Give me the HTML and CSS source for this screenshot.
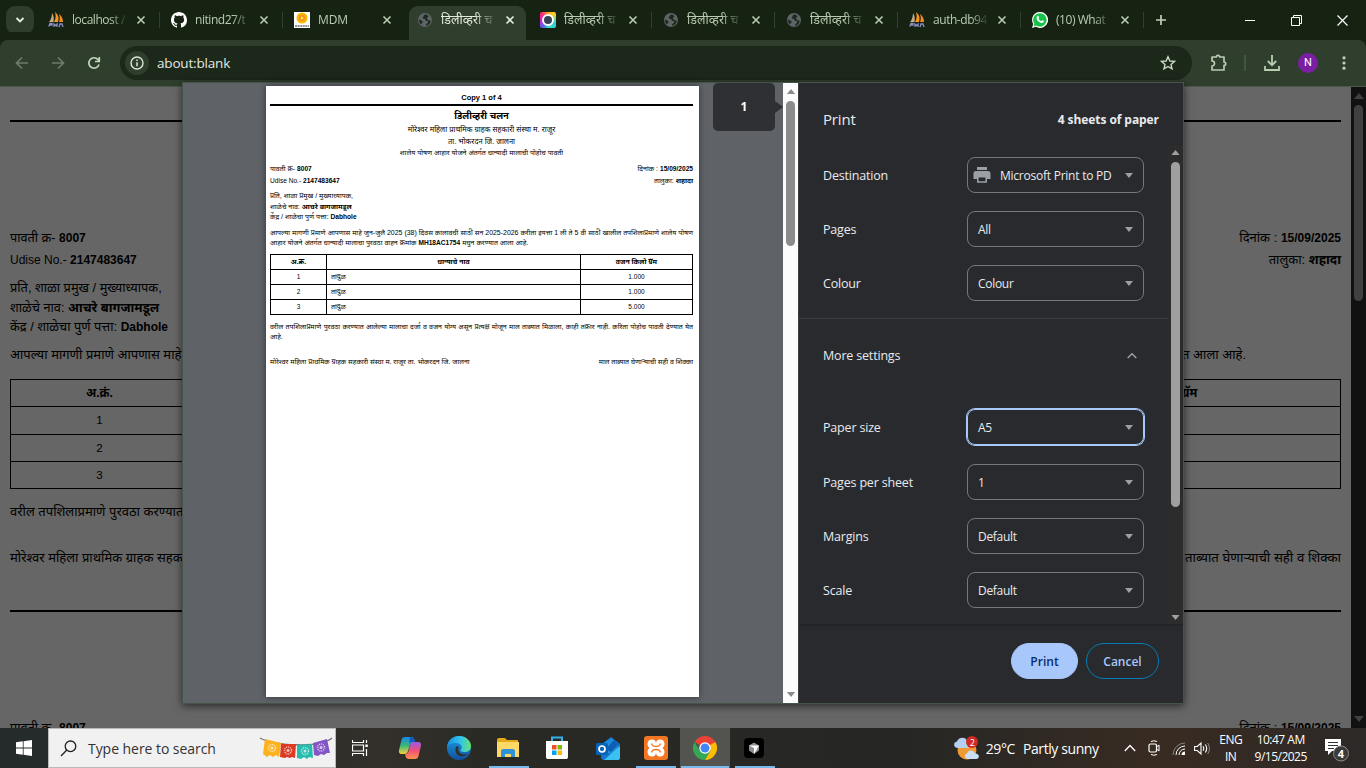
FILE: index.html
```html
<!DOCTYPE html>
<html lang="en">
<head>
<meta charset="utf-8">
<title>about:blank</title>
<link rel="stylesheet" href="styles.css">
</head>
<body>
<svg class="defs" width="0" height="0">
  <symbol id="pma" viewBox="0 0 16 16"><path d="M1 10C3 8 4 4 4 1c2 3 2 6 1.500 9z" fill="#c9ad86"/><path d="M6 10C8 7 8 3 7 0c4 3 4 7 3 10z" fill="#f7931e"/><path d="M11 10c1-2 1-5 0-8 3 2 4 5 4 8z" fill="#ef8a1c"/><path d="M.8 14.500 2 11.500h2v1.500H2M6 15v-3l1.500 1.500L9 12v3M11 15l1-3h2l1 3" fill="none" stroke="#8d8fc4" stroke-width="1.300"/></symbol>
  <symbol id="globe" viewBox="0 0 16 16"><circle cx="8" cy="8" r="7" fill="#5f6368"/><path d="M8 2.500c-2 1-1 2-2 2.500s0 2 1.500 2S8 9 10 9s1 2 0 2.500-.500 2-1.500 2.500c3-.500 5-2.500 5.300-5.300-1-.700-2 .300-3-1S9.500 6 11 5 10 2.500 8 2.500zM2 7.500c1 0 2 .500 3 1.500s1 1.500 0 2-1 1.500-1 1.500C2.500 11.500 2 9.500 2 7.500z" fill="#1d2b1c"/></symbol>
  <symbol id="x" viewBox="0 0 10 10"><path d="M1.500 1.500l7 7M8.500 1.500l-7 7" stroke="currentColor" stroke-width="1.600" fill="none"/></symbol>
  <symbol id="tri" viewBox="0 0 10 6"><path d="M0 6 5 0l5 6z" fill="currentColor"/></symbol>
  <symbol id="down" viewBox="0 0 8 5"><path d="M0 0h8L4 5z" fill="currentColor"/></symbol>
</svg>

<div class="screen">
  <header class="tabs">
    <div class="tab-search"><svg width="10" height="10" viewBox="0 0 10 10"><path d="M1.500 3 5 6.500 8.500 3" fill="none" stroke="#e3ecdf" stroke-width="1.900"/></svg></div>
    <div class="tab"><svg class="fav"><use href="#pma"/></svg><span class="label">localhost /</span><svg class="close"><use href="#x"/></svg></div>
    <div class="tab"><svg class="fav" viewBox="0 0 16 16"><path fill="#fff" d="M8 0C3.580 0 0 3.580 0 8c0 3.540 2.290 6.530 5.470 7.590.4.070.55-.17.55-.38 0-.19-.01-.82-.01-1.490-2.010.37-2.530-.49-2.690-.94-.09-.23-.48-.94-.82-1.130-.28-.15-.68-.52-.01-.53.63-.01 1.080.58 1.230.82.72 1.210 1.870.87 2.330.66.07-.52.28-.87.51-1.070-1.780-.2-3.640-.89-3.640-3.950 0-.87.31-1.590.82-2.150-.08-.2-.36-1.020.08-2.120 0 0 .67-.21 2.200.82.64-.18 1.320-.27 2-.27s1.360.09 2 .27c1.530-1.040 2.200-.82 2.200-.82.44 1.100.16 1.920.08 2.120.51.56.82 1.270.82 2.150 0 3.070-1.870 3.750-3.650 3.950.29.25.54.73.54 1.480 0 1.070-.01 1.930-.01 2.200 0 .21.15.46.55.38A8.010 8.010 0 0 0 16 8c0-4.420-3.580-8-8-8z"/></svg><span class="label">nitind27/t</span><svg class="close"><use href="#x"/></svg></div>
    <div class="tab last"><svg class="fav" viewBox="0 0 16 16"><path fill="#fff" d="M0 0h16v16H0z"/><circle cx="8" cy="6" r="5.500" fill="#f9b700"/><circle cx="8" cy="6" r="3" fill="#f58a1f"/><circle cx="8" cy="6" r="1.500" fill="#ffe14a"/><path d="M1 14h14" stroke="#6c6b78" stroke-width="1.500" stroke-dasharray="2 .6"/></svg><span class="label plain">MDM</span><svg class="close"><use href="#x"/></svg></div>
    <div class="tab active"><svg class="fav"><use href="#globe"/></svg><span class="label hi">डिलीव्हरी च</span><svg class="close"><use href="#x"/></svg></div>
    <div class="tab"><i class="fav camera"><b></b></i><span class="label hi">डिलीव्हरी च</span><svg class="close"><use href="#x"/></svg></div>
    <div class="tab"><svg class="fav"><use href="#globe"/></svg><span class="label hi">डिलीव्हरी च</span><svg class="close"><use href="#x"/></svg></div>
    <div class="tab"><svg class="fav"><use href="#globe"/></svg><span class="label hi">डिलीव्हरी च</span><svg class="close"><use href="#x"/></svg></div>
    <div class="tab"><svg class="fav"><use href="#pma"/></svg><span class="label">auth-db94</span><svg class="close"><use href="#x"/></svg></div>
    <div class="tab"><svg class="fav" viewBox="0 0 16 16"><path d="M0 16 1.200 12A8 8 0 1 1 4 14.800z" fill="#fff"/><path d="M1.600 14.400 2.400 11.800A6.700 6.700 0 1 1 4.300 13.600z" fill="#16c24a"/><path d="M5.200 4.200c1-.9 1.500.2 1.900 1.300.1.500-.6.900-.5 1.200.5 1.100 1.400 1.900 2.500 2.300.4.100.8-.9 1.200-.8 1.100.4 2 .7 1.400 1.700-.8 1.300-2.300 1.200-4 .3C5.600 9.100 3.500 6.500 5.200 4.200z" fill="#fff"/></svg><span class="label">(10) What</span><svg class="close"><use href="#x"/></svg></div>
    <svg class="plus" width="12" height="12" viewBox="0 0 12 12"><path d="M6 1v10M1 6h10" stroke="#c1d0bb" stroke-width="1.700"/></svg>
    <div class="window-buttons">
      <svg width="11" height="11" viewBox="0 0 11 11"><path d="M0 5.500h10" stroke="#fff"/></svg>
      <svg width="11" height="11" viewBox="0 0 11 11"><path d="M.5 2.500h8v8h-8zM2.500 2.500v-2h8v8h-2" fill="none" stroke="#fff"/></svg>
      <svg width="11" height="11" viewBox="0 0 11 11"><path d="M.5.5l10 10M10.500.5l-10 10" fill="none" stroke="#fff" stroke-width="1.200"/></svg>
    </div>
  </header>

  <nav class="toolbar">
    <svg class="nav dim" viewBox="0 0 16 16"><path d="M14 8H3M8 2.500 2.500 8 8 13.500"/></svg>
    <svg class="nav dim" viewBox="0 0 16 16"><path d="M2 8h11M8 2.500 13.500 8 8 13.500"/></svg>
    <svg class="nav" viewBox="0 0 16 16"><path d="M13 9.500A5.200 5.200 0 1 1 12 4.600l1 1.400M13.300 2v4.500H9"/></svg>
    <div class="omnibox">
      <span class="site-info"><svg width="14" height="14" viewBox="0 0 14 14"><circle cx="7" cy="7" r="6" fill="none" stroke="#dde6d9" stroke-width="1.400"/><path d="M7 6.200v4M7 3.600v1.500" stroke="#dde6d9" stroke-width="1.500"/></svg></span>
      <span class="url">about:blank</span>
      <svg width="16" height="16" viewBox="0 0 16 16"><path d="M8 1.800l1.900 4.200 4.500.4-3.400 3 1 4.500L8 11.500l-4 2.400 1-4.500-3.400-3 4.500-.4z" fill="none" stroke="#cad9c4" stroke-width="1.400"/></svg>
    </div>
    <svg class="ext" width="18" height="18" viewBox="0 0 18 18"><path d="M2 3h4.300a1.700 1.700 0 0 1 3.400 0H14v5a1.700 1.700 0 0 1 0 3.400V16H2v-4a2.500 2.500 0 0 0 0-5z" fill="none" stroke="#b9ccb2" stroke-width="1.700" stroke-linejoin="round"/></svg>
    <i class="tool-sep"></i>
    <svg class="dl" width="16" height="16" viewBox="0 0 16 16"><path d="M8 0v10M3.800 6 8 10.200 12.200 6M1 11v4h14v-4" fill="none" stroke="#b9ccb2" stroke-width="1.800"/></svg>
    <span class="avatar">N</span>
    <svg class="more" width="4" height="14" viewBox="0 0 4 14"><g fill="#c1d0bb"><circle cx="2" cy="1.800" r="1.600"/><circle cx="2" cy="7" r="1.600"/><circle cx="2" cy="12.200" r="1.600"/></g></svg>
  </nav>

  <main class="viewport">
    <div class="bill">
      <hr class="rule">
      <div class="pair first"><span>पावती क्र- <b class="lat">8007</b></span><span>दिनांक : <b class="lat">15/09/2025</b></span></div>
      <div class="pair"><span class="lat">Udise No.- <b>2147483647</b></span><span>तालुका: <b>शहादा</b></span></div>
      <div class="address"><p>प्रति, शाळा प्रमुख / मुख्याध्यापक,</p><p>शाळेचे नाव: <b>आचरे बागजामडूल</b></p><p>केंद्र / शाळेचा पुर्ण पत्ता: <b class="lat">Dabhole</b></p></div>
      <div class="pair body"><span>आपल्या मागणी प्रमाणे आपणास माहे जुन</span><span class="tail">त आला आहे.</span></div>
      <div class="grid">
        <div class="grow head"><b>अ.क्रं.</b><b></b><b>ग्रॅम</b></div>
        <div class="grow"><span>1</span><span></span><span></span></div>
        <div class="grow"><span>2</span><span></span><span></span></div>
        <div class="grow"><span>3</span><span></span><span></span></div>
      </div>
      <div class="pair note"><span>वरील तपशिलाप्रमाणे पुरवठा करण्यात आ</span></div>
      <div class="pair sign"><span>मोरेश्वर महिला प्राथमिक ग्राहक सहकारी</span><span class="wide">माल ताब्यात घेणाऱ्याची सही व शिक्का</span></div>
      <hr class="rule second">
      <div class="pair next"><span>पावती क्र- <b class="lat">8007</b></span><span>दिनांक : <b class="lat">15/09/2025</b></span></div>
    </div>
    <div class="page-scroll"><svg width="10" height="6"><use href="#tri"/></svg><i></i><svg class="flip" width="10" height="6"><use href="#tri"/></svg></div>
  </main>

  <section class="dialog">
    <div class="preview">
      <article class="sheet">
        <div class="copy">Copy 1 of 4</div>
        <h1>डिलीव्हरी चलन</h1>
        <p class="center">मोरेश्वर महिला प्राथमिक ग्राहक सहकारी संस्था म. राजूर</p>
        <p class="center">ता. भोकरदन जि. जालना</p>
        <p class="center sub">शालेय पोषण आहार योजने अंतर्गत धान्यादी मालाची पोहोच पावती</p>
        <div class="line top"><span>पावती क्र- <b class="sm">8007</b></span><span>दिनांक : <b class="sm">15/09/2025</b></span></div>
        <div class="line"><span class="sm">Udise No.- <b>2147483647</b></span><span>तालुका: <b>शहादा</b></span></div>
        <div class="to"><p>प्रति, शाळा प्रमुख / मुख्याध्यापक,</p><p>शाळेचे नाव: <b>आचरे बागजामडूल</b></p><p>केंद्र / शाळेचा पुर्ण पत्ता: <b class="sm">Dabhole</b></p></div>
        <div class="para"><p class="just">आपल्या मागणी प्रमाणे आपणास माहे जुन-जुलै 2025 (38) दिवस कालावधी साठी सन 2025-2026 करीता इयत्ता 1 ली ते 5 वी साठी खालील तपशिलाप्रमाणे शालेय पोषण</p><p>आहार योजने अंतर्गत धान्यादी मालाचा पुरवठा वाहन क्रमांक <b class="sm">MH18AC1754</b> मधुन करण्यात आला आहे.</p></div>
        <table>
          <tr><th class="c1">अ.क्रं.</th><th>धान्याचे नाव</th><th class="c3">वजन किलो ग्रॅम</th></tr>
          <tr><td>1</td><td class="item">तांदुळ</td><td>1.000</td></tr>
          <tr><td>2</td><td class="item">तांदुळ</td><td>1.000</td></tr>
          <tr><td>3</td><td class="item">तांदुळ</td><td>5.000</td></tr>
        </table>
        <div class="para after"><p class="just">वरील तपशिलाप्रमाणे पुरवठा करण्यात आलेल्या मालाचा दर्जा व वजन योग्य असून प्रत्यक्ष मोजून माल ताब्यात मिळाला, काही तक्रार नाही. करिता पोहोच पावती देण्यात येत</p><p>आहे.</p></div>
        <div class="line foot"><span>मोरेश्वर महिला प्राथमिक ग्राहक सहकारी संस्था म. राजूर ता. भोकरदन जि. जालना</span><span>माल ताब्यात घेणाऱ्याची सही व शिक्का</span></div>
      </article>
      <div class="page-number">1</div>
      <div class="preview-scroll"><svg width="10" height="5" viewBox="0 0 10 6"><use href="#tri"/></svg><i></i><svg class="flip" width="10" height="5" viewBox="0 0 10 6"><use href="#tri"/></svg></div>
    </div>
    <aside class="panel">
      <div class="panel-head"><span class="title">Print</span><b>4 sheets of paper</b></div>
      <div class="settings">
        <div class="options">
          <div class="row"><label>Destination</label><div class="select dest"><svg width="18" height="16" viewBox="0 0 18 16"><path d="M4 0h10v3H4zM3 4h12a2.500 2.500 0 0 1 2.500 2.500V12H14V9H4v3H.500V6.500A2.500 2.500 0 0 1 3 4z" fill="#9aa0a6"/><path d="M4.800 9.800h8.400V15H4.800z" fill="none" stroke="#9aa0a6" stroke-width="1.600"/></svg><span>Microsoft Print to PD</span><svg class="arrow"><use href="#down"/></svg></div></div>
          <div class="row"><label>Pages</label><div class="select"><span>All</span><svg class="arrow"><use href="#down"/></svg></div></div>
          <div class="row"><label>Colour</label><div class="select"><span>Colour</span><svg class="arrow"><use href="#down"/></svg></div></div>
          <div class="expander"><span>More settings</span><svg width="10" height="7" viewBox="0 0 10 7"><path d="M.7 6 5 1.700 9.300 6" fill="none" stroke="#9aa0a6" stroke-width="1.500"/></svg></div>
          <div class="row"><label>Paper size</label><div class="select focus"><span>A5</span><svg class="arrow"><use href="#down"/></svg></div></div>
          <div class="row lower"><label>Pages per sheet</label><div class="select"><span>1</span><svg class="arrow"><use href="#down"/></svg></div></div>
          <div class="row"><label>Margins</label><div class="select"><span>Default</span><svg class="arrow"><use href="#down"/></svg></div></div>
          <div class="row"><label>Scale</label><div class="select"><span>Default</span><svg class="arrow"><use href="#down"/></svg></div></div>
        </div>
        <div class="panel-scroll"><svg width="9" height="5" viewBox="0 0 10 6"><use href="#tri"/></svg><i></i><svg class="flip" width="9" height="5" viewBox="0 0 10 6"><use href="#tri"/></svg></div>
      </div>
      <div class="actions"><span class="btn primary">Print</span><span class="btn">Cancel</span></div>
    </aside>
  </section>

  <footer class="taskbar">
    <div class="start"><svg width="16" height="16" viewBox="0 0 16 16"><path d="M0 2.300 6.800 1.300v6.300H0zM7.600 1.200 16 0v7.600H7.600zM0 8.400h6.800v6.300L0 13.700zM7.600 8.400H16V16l-8.400-1.200z" fill="#fff"/></svg></div>
    <div class="search"><svg width="17" height="17" viewBox="0 0 17 17"><circle cx="10.500" cy="6.300" r="5.300" fill="none" stroke="#222" stroke-width="1.300"/><path d="M6.800 10 1 16" stroke="#222" stroke-width="1.300"/></svg><span>Type here to search</span>
      <svg class="flags" width="74" height="24" viewBox="0 0 74 24"><path d="M1 2C14 9 60 13 73 2" fill="none" stroke="#777" stroke-width="1.300"/><path d="M6 3l16 4-2 14-3-2-3 2-3-2-3 2-4-3z" fill="#fbb21c"/><path d="M22 8h15l-1 14-3-1-2 1-3-1-2 1-5-1z" fill="#dc3a23"/><path d="M38 9l15-1 1 14-4-1-2 2-3-2-3 2-4-1z" fill="#27bcae"/><path d="M54 7l14-4 3 14-3 0-3 2-3-1-3 2-4-1z" fill="#8455c4"/><g fill="none" stroke="#fff" stroke-opacity=".75" stroke-width="1.500" stroke-dasharray="1 1"><circle cx="13" cy="12" r="3.500"/><circle cx="29" cy="14.500" r="3.500"/><circle cx="46" cy="15" r="3.500"/><circle cx="62" cy="11.500" r="3.500"/></g><g fill="#fff" fill-opacity=".7"><circle cx="13" cy="12" r="1.500"/><circle cx="29" cy="14.500" r="1.500"/><circle cx="46" cy="15" r="1.500"/><circle cx="62" cy="11.500" r="1.500"/></g></svg></div>
    <div class="apps">
      <div class="app"><svg width="17" height="16" viewBox="0 0 17 16"><path d="M.5 0v2.500h11V0M.5 5h11v6H.5zM.5 16v-2.500h11V16M14.500 0v3M14.500 9v7" fill="none" stroke="#fff" stroke-width="1.200"/><path d="M13.300 4.500h2.500V7h-2.500z" fill="#fff"/></svg></div>
      <div class="app"><svg width="24" height="24" viewBox="0 0 24 24"><defs><linearGradient id="ca" x2="0" y2="1"><stop stop-color="#1587e8"/><stop offset=".5" stop-color="#38b879"/><stop offset="1" stop-color="#f7d23b"/></linearGradient><linearGradient id="cb" x2="0" y2="1"><stop stop-color="#9759e6"/><stop offset=".5" stop-color="#f0507a"/><stop offset="1" stop-color="#fd934b"/></linearGradient></defs><path d="M7 1h6c2 0 3 1 3.500 3l.5 3h-2c-2 0-3 1-3.500 3l-1.500 5c-.5 2-1.500 3-3.500 3H4c-3 0-3.500-2-2.700-5l2.200-9C4 2 5 1 7 1z" fill="url(#ca)"/><path d="M13 1c2 0 3 1 3.500 3l.5 2h-3c-2 0-2.500 1-3 2l1-7z" fill="#1558c8"/><path d="M17 23h-6c-2 0-3-1-3.500-3L7 18c2 0 3-1 3.500-3L12 9c.5-2 1.500-3 3.500-3H20c3 0 3.500 2 2.700 5l-2.200 9c-.5 2-1.500 3-3.500 3z" fill="url(#cb)"/></svg></div>
      <div class="app"><svg width="24" height="24" viewBox="0 0 24 24"><defs><linearGradient id="ea"><stop stop-color="#168fdc"/><stop offset=".55" stop-color="#32c3ef"/><stop offset="1" stop-color="#66e46e"/></linearGradient><linearGradient id="eb" x2="0" y2="1"><stop stop-color="#1b9de2"/><stop offset="1" stop-color="#1150a0"/></linearGradient></defs><circle cx="12" cy="12" r="12" fill="url(#eb)"/><path d="M0 11C1 4 6 0 12 0c7 0 12 5 12 10 0 4-3 6-6.500 6-4 0-4.500-1.500-3.500-2.500C16 11 14 7 9 7c-5 0-8 2-9 4z" fill="url(#ea)"/><path d="M10 10c-4 4 0 12 7 10 2-.5 3-1.400 4.500-2.500-2 1.200-8 2-9.800-2-1-2.300.3-3.500-.2-4.500-.3-.7-.8-.9-1.500-1z" fill="#303127"/></svg></div>
      <div class="app run"><svg width="22" height="20" viewBox="0 0 22 20"><path d="M0 2c0-1 .5-2 2-2h6l2 2h11v16H0z" fill="#e5a91b"/><path d="M0 4h22v15H0z" fill="#ffd968"/><path d="M4 19v-6c0-1 1-2 2-2h10c1 0 2 1 2 2v6h-4v-3H8v3z" fill="#2f91d6"/></svg></div>
      <div class="app"><svg width="24" height="24" viewBox="0 0 24 24"><path d="M7 6V1.500h10V6" fill="none" stroke="#33b1ec" stroke-width="2"/><path d="M1 5h22v16c0 1.500-1 2-2 2H3c-1 0-2-.500-2-2z" fill="#fff"/><path d="M7 9h4.500v4.500H7z" fill="#f25022"/><path d="M12.500 9H17v4.500h-4.500z" fill="#7fba00"/><path d="M7 14.500h4.500V19H7z" fill="#00a4ef"/><path d="M12.500 14.500H17V19h-4.500z" fill="#ffb900"/></svg></div>
      <div class="app outlook"><svg width="24" height="23" viewBox="0 0 24 23"><path d="M6 7 15 0l9 7v13c0 2-1 3-3 3H8c-2 0-3-1-3-3z" fill="#1475ca"/><path d="M8 6 15 1l7 5v8l-8 3-6-3z" fill="#1b8ddf"/><path d="M10 12l8-9 5 4-8 8z" fill="#0e5fb4"/><path d="M24 9v12c0 1-1 2-2 2H8z" fill="#3bc1ef"/><rect y="6" width="12" height="12" rx="1.500" fill="#0763b8"/><circle cx="6" cy="12" r="3" fill="none" stroke="#fff" stroke-width="1.700"/></svg></div>
      <div class="app run"><svg width="24" height="24" viewBox="0 0 24 24"><rect width="24" height="24" rx="3" fill="#f37623"/><path d="M8 3.500c2.500 0 4 1.500 4 4 0-2.500 1.500-4 4-4 3 0 4.500 2 4.500 4.500 0 2-1 3.200-2 4 1 .8 2 2 2 4 0 2.500-1.500 4.500-4.500 4.500-2.500 0-4-1.500-4-4 0 2.500-1.500 4-4 4-3 0-4.500-2-4.500-4.500 0-2 1-3.200 2-4-1-.8-2-2-2-4 0-2.500 1.500-4.500 4.500-4.500z" fill="#fff"/><path d="M7.500 7.500q.5 3 4.500 3t4.500-3M7.500 16.500q.5-3 4.500-3t4.500 3" fill="none" stroke="#f37623" stroke-width="1.300"/></svg></div>
      <div class="app run current"><svg width="24" height="24" viewBox="0 0 24 24"><path d="M1.600 6A12 12 0 0 1 22.400 6L12 12z" fill="#ea4335"/><path d="M1.600 6A12 12 0 0 0 12 24l5.500-9.500L12 12 6.500 14.500z" fill="#34a853"/><path d="M22.400 6A12 12 0 0 1 12 24l5.500-9.500L12 6z" fill="#fbbc04"/><path d="M6.500 6h15.900L12 12z" fill="#ea4335"/><circle cx="12" cy="12" r="5.800" fill="#fff"/><circle cx="12" cy="12" r="4.500" fill="#4285f4"/></svg></div>
      <div class="app run"><svg width="20" height="20" viewBox="0 0 20 20"><rect width="20" height="20" rx="4" fill="#000"/><path d="M10 4.500 15 7.500v5L10 16l-5-3.500v-5z" fill="#8f8f8f"/><path d="M5 7.500h10L10 16v-6z" fill="#fff"/></svg></div>
    </div>
    <div class="weather"><svg width="26" height="24" viewBox="0 0 26 24"><circle cx="13" cy="14" r="9.500" fill="#f09a36"/><path d="M4 12c-5 0-5-6-1-6.500C4 1 12 0 13 5c4 0 4 7 0 7z" fill="#b4cff2"/><path d="M14 23c-4 0-4-5-1-5.500 1-4 7-4 8 0 5 0 5 5.500 1 5.500z" fill="#c9def7"/><circle cx="18" cy="6" r="6" fill="#cf2a25"/><text x="18" y="9.500" class="badge-text">2</text></svg><span>29°C</span><span class="sky">Partly sunny</span></div>
    <div class="tray">
      <svg width="12" height="8" viewBox="0 0 12 8"><path d="M.8 7 6 1.500 11.200 7" fill="none" stroke="#fff" stroke-width="1.300"/></svg>
      <svg width="12" height="16" viewBox="0 0 12 16"><path d="M3 1.500q3-1.500 6 0M3 14.500q3 1.500 6 0" fill="none" stroke="#fff"/><rect x="1" y="4" width="7.500" height="8" rx="1.500" fill="none" stroke="#fff" stroke-width="1.200"/><path d="M8.500 7 11 5v6L8.500 9" fill="none" stroke="#fff"/></svg>
      <svg width="13" height="13" viewBox="0 0 13 13"><g fill="none" stroke="#858585"><path d="M1 13A12 12 0 0 1 13 1"/></g><g fill="none" stroke="#fff"><path d="M4 13a9 9 0 0 1 9-9M7 13a6 6 0 0 1 6-6"/></g><path d="M9.500 13a3.500 3.500 0 0 1 3.500-3.500V13z" fill="#fff"/></svg>
      <svg class="volume" width="17" height="13" viewBox="0 0 17 13"><path d="M.6 4.500h2.700L7 1v11L3.300 8.500H.6zM9 4.200q1.500 2.300 0 4.600M11.300 2.500q2.800 4 0 8" fill="none" stroke="#fff" stroke-width="1.100"/><path d="M13.700 1q3.600 5.500 0 11" fill="none" stroke="#8a8a8a"/></svg>
    </div>
    <div class="lang"><span>ENG</span><span>IN</span></div>
    <div class="clock"><span>10:47 AM</span><span>9/15/2025</span></div>
    <div class="notice"><svg width="26" height="25" viewBox="0 0 26 25"><path d="M1 2h16v12H8l-4 4v-4H1z" fill="#fff"/><path d="M4 5.500h10M4 8.500h10M4 11.500h6" stroke="#333"/><circle cx="17" cy="16.500" r="7.500" fill="#3a3a3a" stroke="#8b8b8b"/><text x="17" y="20.500" class="count">4</text></svg></div>
  </footer>
</div>
</body>
</html>
```
FILE: styles.css
```css
* { box-sizing: border-box; }
body { margin: 0; overflow: hidden; font-family: "Open Sans", "Noto Sans", sans-serif; }
p, h1, hr { margin: 0; }
svg { display: block; flex: none; }
i, b { font-style: normal; }
.defs { position: absolute; }
.screen { position: relative; width: 1366px; height: 768px; display: flex; flex-direction: column; overflow: hidden; }
.flip { transform: scaleY(-1); }

/* Tab strip */
.tabs { height: 40px; display: flex; align-items: center; background: #162313; flex: none; color: #b9ccb2; }
.tab-search { width: 28px; height: 28px; margin: 0 3px 0 6px; border-radius: 9px; background: #2e3d2c; display: grid; place-items: center; }
.tab { position: relative; width: 123px; height: 34px; margin-top: 6px; padding: 0 0 6px 11px; display: flex; align-items: center; }
.tab::after { content: ""; width: 2px; height: 16px; background: #30402d; margin-left: 13px; }
.tab.last::after, .tab.active::after { background: transparent; }
.fav { width: 16px; height: 16px; flex: none; }
.label { width: 54px; flex: none; margin-left: 8px; font-size: 12px; letter-spacing: -.45px; line-height: 18px; white-space: nowrap; overflow: hidden; -webkit-mask-image: linear-gradient(90deg, #000 70%, rgba(0, 0, 0, .1)); mask-image: linear-gradient(90deg, #000 70%, rgba(0, 0, 0, .1)); }
.label.plain { letter-spacing: -.15px; }
.label.hi { font-size: 12.500px; letter-spacing: 0; -webkit-mask-image: linear-gradient(90deg, #000 62%, rgba(0, 0, 0, .08)); mask-image: linear-gradient(90deg, #000 62%, rgba(0, 0, 0, .08)); }
.close { width: 10px; height: 10px; margin-left: 10px; }
.tab.active { color: #e3ecdf; z-index: 1; }
.tab.active::before { content: ""; position: absolute; z-index: -1; inset: 0 3px 0 3px; border-radius: 9px 9px 0 0; background: #2f3e2d; }
.camera { display: grid; place-items: center; border-radius: 2px; background: conic-gradient(#ffa51f, #ffcf27 12%, #33cbd6 30%, #3adfc4 48%, #4b69ef 60%, #d623d0 74%, #ff2f71 88%, #ffa51f); }
.camera b { width: 12px; height: 12px; border-radius: 50%; border: 2px solid #fff; background: #324156; }
.plus { margin-left: 11px; }
.window-buttons { margin-left: auto; display: flex; gap: 35px; padding-right: 18px; }
.window-buttons svg { width: 11px; }

/* Toolbar */
.toolbar { height: 47px; flex: none; display: flex; align-items: center; background: #2f3e2d; padding-left: 14px; border-bottom: 1px solid #4b5748; border-radius: 8px 8px 0 0; box-shadow: 0 -8px 0 #162313; padding-bottom: 1px; }
.nav { width: 16px; height: 16px; margin-right: 20px; fill: none; stroke: #c1d5ba; stroke-width: 1.7; }
.nav.dim { stroke: #6e7c6a; }
.omnibox { width: 1072px; height: 34px; margin-left: -2px; padding: 0 16px 0 5px; border-radius: 17px; background: #1c2819; display: flex; align-items: center; }
.site-info { width: 24px; height: 24px; border-radius: 50%; background: #2f3e2d; display: grid; place-items: center; }
.url { flex: 1; margin-left: 8px; font-size: 13.500px; color: #e3e9e0; letter-spacing: -.18px; }
.ext { margin-left: 18px; }
.tool-sep { width: 2px; height: 16px; margin-left: 16px; background: #42553e; }
.dl { margin-left: 18px; }
.avatar { width: 20px; height: 20px; margin-left: 18px; border-radius: 50%; background: #7b1fa2; color: #fff; font: 11px/20px Roboto, sans-serif; text-align: center; }
.more { margin-left: 24px; }

/* Page behind the dialog */
.viewport { flex: 1; min-height: 0; display: flex; background: #666; overflow: hidden; }
.bill { flex: 1; padding: 33px 10px 0; font: 13px/22px "Liberation Sans", "Noto Sans", sans-serif; color: #000; white-space: nowrap; }
.lat { font-size: 12px; }
.rule { height: 2px; border: 0; background: #000; }
.pair { display: flex; justify-content: space-between; height: 22px; }
.pair.first { margin-top: 105px; }
.pair.first > span:first-child, .pair.next > span:first-child { font-size: 12.700px; }
.address { margin-top: 7px; height: 60px; line-height: 19.700px; font-size: 12.800px; }
.pair.body { margin-top: 6px; }
.pair .tail { margin-right: 95px; }
.pair .wide { font-size: 13.200px; }
.grid { margin-top: 13px; border: 1px solid #000; font-size: 12px; height: 110px; display: flex; flex-direction: column; }
.grow { flex: 1; display: grid; grid-template-columns: 177px 950px 1fr; align-items: center; text-align: center; border-top: 1px solid #000; line-height: 20px; }
.grow:first-child { border-top: 0; }
.grow span { font-size: 11.500px; }
.grow b:last-child { text-align: left; padding-left: 44px; }
.pair.note { margin-top: 12px; }
.pair.sign { margin-top: 24px; }
.rule.second { margin-top: 41px; }
.pair.next { margin-top: 105px; }
.page-scroll { width: 15px; background: #111; color: #404040; display: flex; flex-direction: column; align-items: center; padding: 6px 0; }
.page-scroll i { width: 9px; height: 196px; margin: 6px 0 auto; border-radius: 5px; background: #404040; }

/* Print dialog */
.dialog { position: absolute; left: 182px; top: 82px; width: 1002px; height: 622px; display: flex; border: 1px solid #45534a; box-shadow: 0 2px 8px rgba(0, 0, 0, .6); background: #292a2d; z-index: 3; }
.preview { position: relative; width: 615px; display: flex; justify-content: space-between; background: #5f6368; }
.sheet { margin: 3px 0 0 83px; width: 433px; height: 611px; padding: 4px 6px 0 4px; background: #fff; color: #000; box-shadow: 0 0 6px rgba(0, 0, 0, .5); font: 7px/12px "Liberation Sans", "Noto Sans", sans-serif; white-space: nowrap; }
.sm { font-size: 6.600px; }
.copy { height: 16px; border-bottom: 2px solid #000; font-weight: bold; font-size: 7.500px; line-height: 15px; text-align: center; }
.sheet h1 { font-size: 9.400px; line-height: 19px; height: 17px; text-align: center; }
.center { height: 12px; line-height: 13px; text-align: center; font-size: 7.500px; }
.center.sub { height: 11px; line-height: 11px; font-size: 7px; }
.line { display: flex; justify-content: space-between; height: 12px; }
.line.top { margin-top: 5px; }
.to { margin-top: 4px; line-height: 10.500px; height: 32px; }
.to p { height: 10.500px; }
.para { margin-top: 5px; line-height: 9.500px; height: 19px; }
.para p { height: 9.500px; }
.just { text-align-last: justify; font-size: 6.950px; }
.sheet table { width: 423px; margin-top: 7px; border-collapse: collapse; table-layout: fixed; font-size: 6.900px; }
.sheet td, .sheet th { height: 15px; padding: 0; border: 1px solid #000; line-height: 10px; text-align: center; }
.sheet td { font-size: 6.500px; }
.sheet td.item { text-align: left; padding-left: 4px; font-size: 7px; }
.c1 { width: 56px; }
.c3 { width: 112px; }
.para.after { margin-top: 7px; }
.line.foot { margin-top: 15px; font-size: 6.920px; }
.page-number { position: absolute; left: 530px; top: 0; width: 62px; height: 48px; border-radius: 5px; background: #2f3034; color: #fff; font: bold 12px/47px "Open Sans", sans-serif; text-align: center; }
.page-number::after { content: ""; position: absolute; left: 62px; top: 18px; border: 6px solid transparent; border-left: 8px solid #2f3034; border-right: 0; }
.preview-scroll { width: 15px; background: #fcfcfc; color: #8b8b8b; display: flex; flex-direction: column; align-items: center; padding: 6px 0; }
.preview-scroll i { width: 9px; height: 145px; margin: 7px 0 auto; border-radius: 5px; background: #8b8b8b; }
.panel { flex: 1; display: flex; flex-direction: column; background: #292a2d; color: #e8eaed; font-size: 12.500px; letter-spacing: -.18px; border-left: 1px solid #3c4043; }
.panel-head { height: 62px; padding: 10px 24px 0 24px; display: flex; align-items: center; justify-content: space-between; }
.panel-head .title { font-size: 15px; }
.panel-head b { font-size: 12px; letter-spacing: -.07px; }
.settings { height: 481px; display: flex; border-bottom: 2px solid #232427; }
.options { flex: 1; padding-top: 3px; }
.row { height: 54px; padding: 0 24px; display: flex; align-items: center; justify-content: space-between; }
.row.lower { margin-top: 1px; }
.select { width: 177px; height: 36px; padding: 0 10px; display: flex; align-items: center; border: 1px solid #75777a; border-radius: 8px; font-size: 12px; letter-spacing: -.3px; }
.select.dest { padding-left: 5px; letter-spacing: -.24px; }
.dest span { margin-left: 9px; }
.select.focus { box-shadow: 0 0 0 1px #a8c7fa; border-color: #a8c7fa; }
.arrow { width: 8px; height: 5px; margin-left: auto; color: #9aa0a6; }
.expander { height: 73px; margin: 8px 0 9px; padding: 0 31px 0 24px; display: flex; align-items: center; justify-content: space-between; border-top: 1px solid #3c4043; }
.panel-scroll { width: 15px; background: #2c2c2c; color: #9f9f9f; display: flex; flex-direction: column; align-items: center; padding: 5px 0 4px; }
.panel-scroll i { width: 9px; height: 345px; margin: 7px 0 auto; border-radius: 5px; background: #9f9f9f; }
.actions { display: flex; justify-content: flex-end; gap: 8px; padding: 17px 24px 0; letter-spacing: 0; }
.btn { width: 73px; height: 36px; border: 1px solid #047db7; border-radius: 18px; color: #a8c7fa; font-size: 12px; font-weight: 600; line-height: 35px; text-align: center; }
.btn.primary { width: 67px; border-color: #a8c7fa; background: #a8c7fa; color: #062e6f; }

/* Taskbar */
.taskbar { position: relative; height: 40px; flex: none; display: flex; background: linear-gradient(90deg, #242b2b, #33302a 28%, #292a24 36%, #262725 66%, #382b22 85%, #2d2927); color: #fff; font-size: 14px; }
.start { width: 48px; display: grid; place-items: center; }
.search { width: 288px; border: 1px solid #b9b9b9; background: #f1f1f1; color: #333; display: flex; align-items: center; padding: 0 2px 0 11px; }
.search span { margin-left: 11px; letter-spacing: -.05px; }
.flags { margin-left: auto; }
.apps { display: flex; }
.app { width: 49.200px; display: grid; place-items: center; position: relative; }
.outlook { padding-left: 2px; }
.app.run::after { content: ""; position: absolute; left: 5px; right: 4px; bottom: 0; height: 2px; background: #76b9ed; }
.app.current::after { left: 1px; right: 1px; }
.app.current { background: #53534f; }
.weather { margin-left: 175px; width: 149px; display: flex; align-items: center; white-space: nowrap; letter-spacing: -.4px; }
.weather span { margin-left: 6px; }
.weather .sky { margin-left: 8px; }
.badge-text { fill: #fff; font-size: 9px; text-anchor: middle; }
.tray { margin-left: 21px; width: 88px; display: flex; align-items: center; gap: 12px; }
.volume { margin-left: -3px; }
.lang, .clock { display: flex; flex-direction: column; align-items: center; justify-content: center; font-size: 12px; line-height: 17px; letter-spacing: -.5px; white-space: nowrap; }
.lang { width: 28px; margin-left: 5px; }
.clock { width: 64px; margin-left: 4px; }
.notice { margin: 9px 0 0 11px; }
.count { fill: #fff; font: bold 11px "Open Sans", sans-serif; text-anchor: middle; }
```
